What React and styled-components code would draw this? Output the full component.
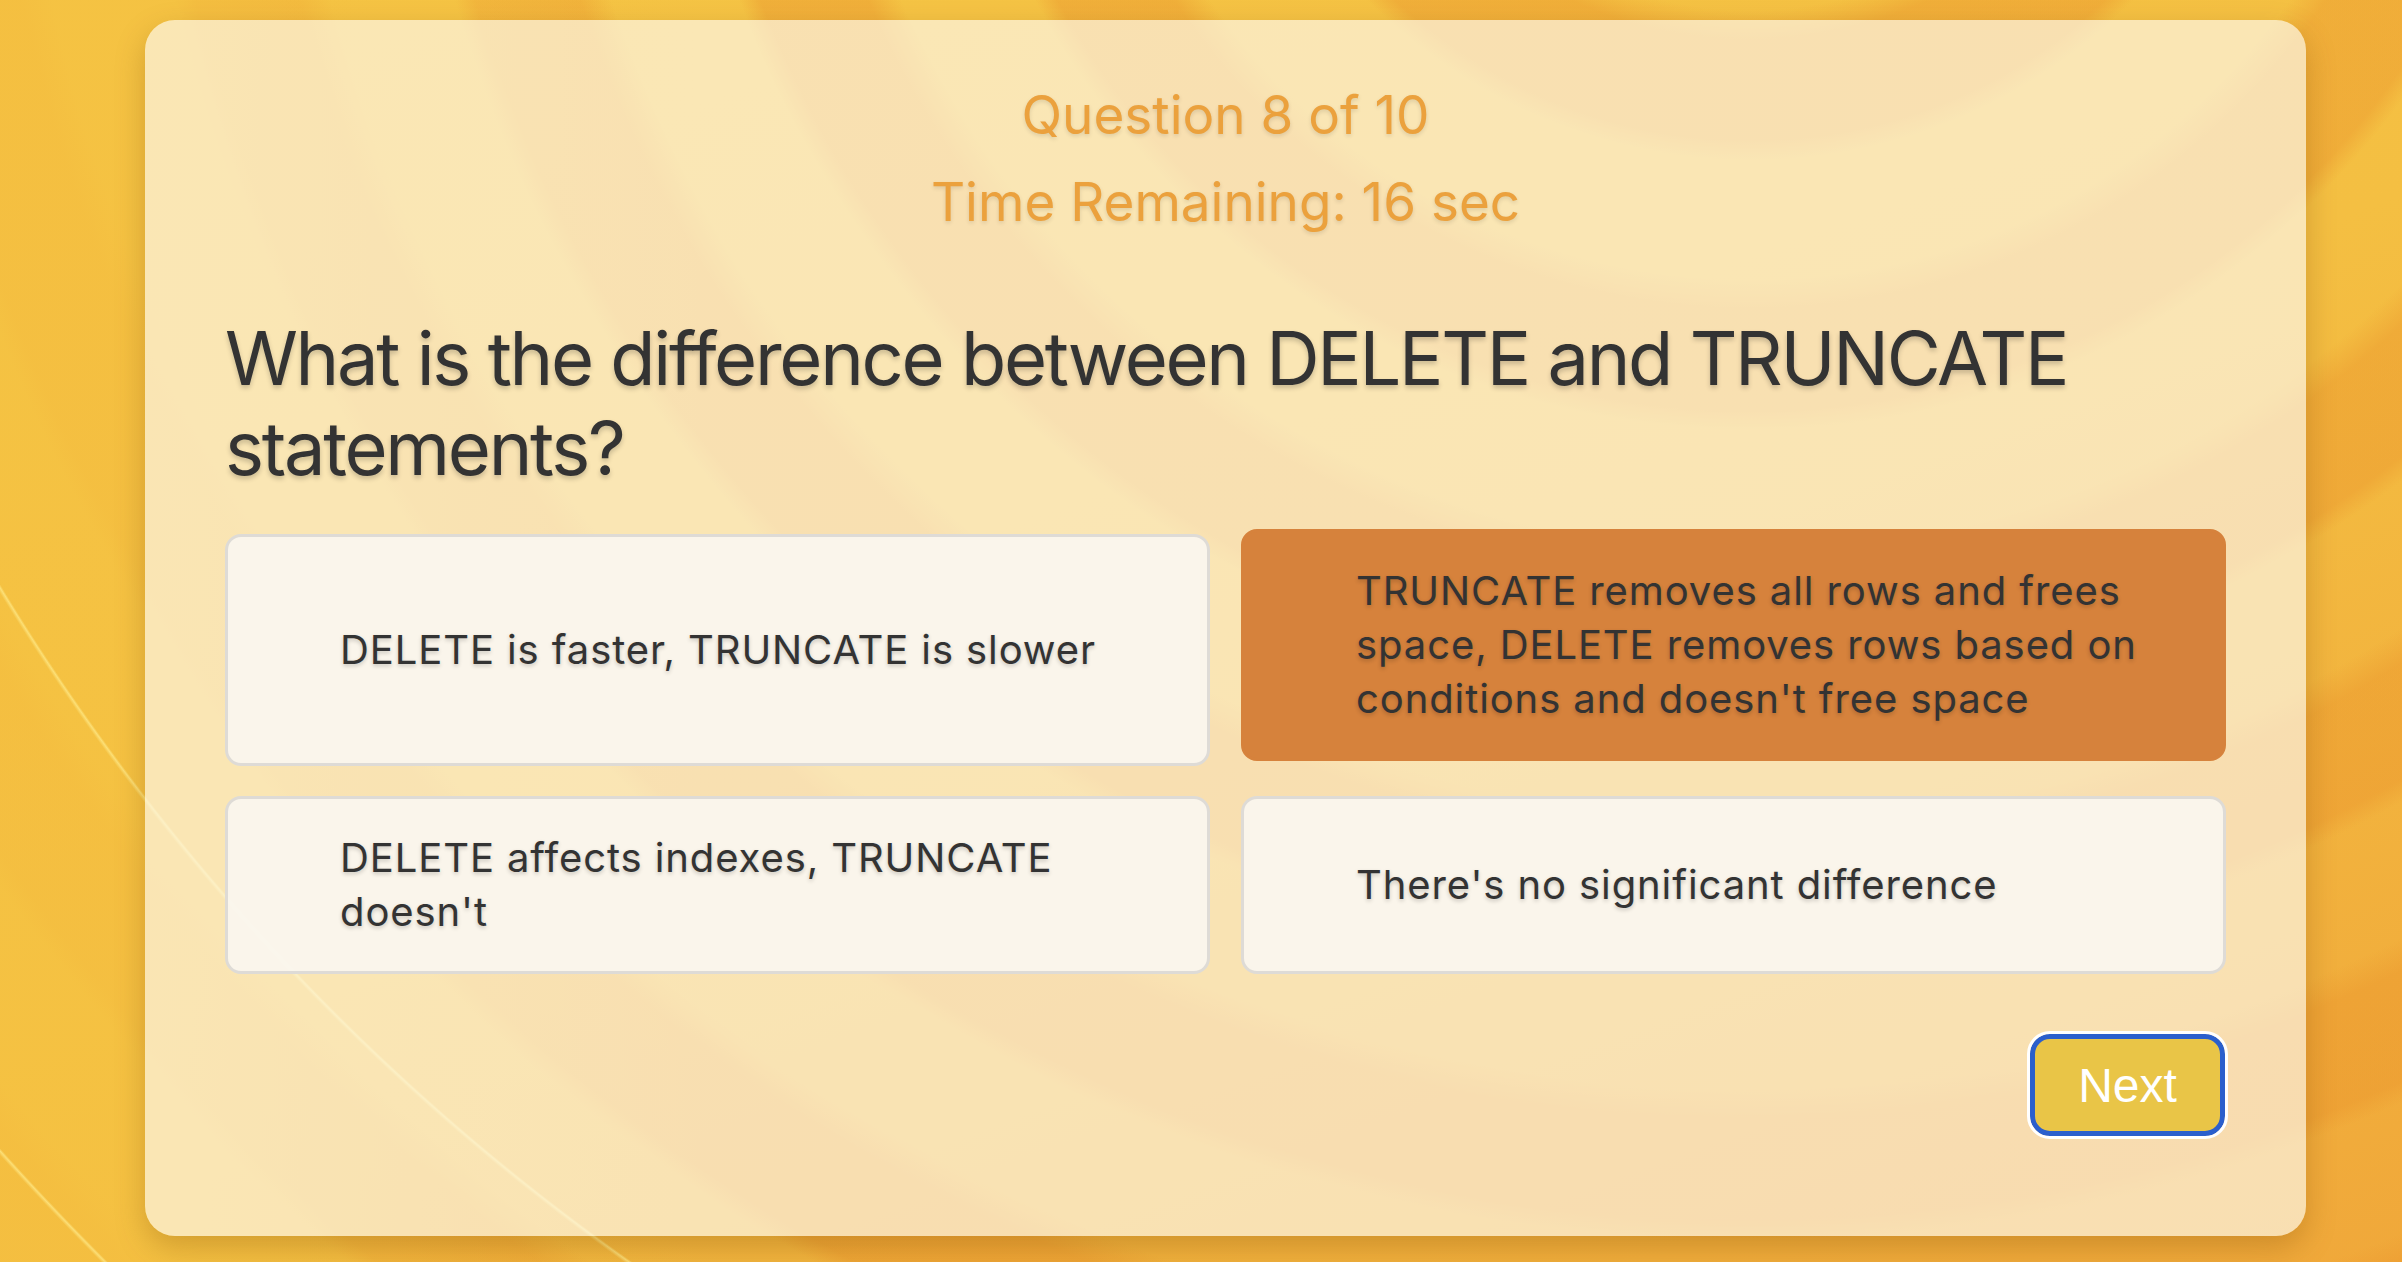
import React from 'react';
import styled, { createGlobalStyle } from 'styled-components';

const GlobalStyle = createGlobalStyle`
    html, body {
        margin: 0;
        padding: 0;
        height: 100%;
    }
    body {
        font-family: Inter, "Noto Sans", "Liberation Sans", sans-serif;
        background-color: #f4bf42;
        background-image:
            radial-gradient(circle at 1936px -588px, transparent 2263px, rgba(255, 236, 140, 0.7) 2265px, transparent 2268px),
            radial-gradient(circle at 2220px -849px, transparent 2986px, rgba(255, 236, 140, 0.7) 2988px, transparent 2991px),
            linear-gradient(90deg, rgba(245, 194, 66, 0.85) 0px, rgba(245, 194, 66, 0.85) 140px, rgba(245, 194, 66, 0) 700px),
            repeating-radial-gradient(circle at 1750px -380px,
                rgba(245, 196, 68, 0) 0px, rgba(245, 196, 68, 0) 120px,
                rgba(234, 148, 44, 0.42) 150px, rgba(234, 148, 44, 0.42) 250px,
                rgba(245, 196, 68, 0) 270px),
            linear-gradient(160deg, #f5c545 0%, #f4bf42 50%, #f0a83a 100%);
        overflow: hidden;
    }
`;

const Page = styled.div`
    width: 2402px;
    height: 1262px;
    box-sizing: border-box;
    padding: 20px 96px 0 145px;
    display: flex;
    align-items: flex-start;
`;

const Card = styled.div`
    flex: 1;
    box-sizing: border-box;
    height: 1216px;
    padding: 63px 80px 0;
    background: rgba(252, 247, 235, 0.68);
    border-radius: 30px;
    box-shadow: 0 12px 30px rgba(120, 70, 0, 0.28);
    display: flex;
    flex-direction: column;
`;

const Meta = styled.div`
    text-align: center;
    color: #eba13d;
    font-size: 53px;
    line-height: 65px;
    text-shadow: 0 2px 4px rgba(0, 0, 0, 0.12);
    & + & {
        margin-top: 22px;
    }
`;

const Question = styled.h2`
    margin: 78px 0 0;
    font-size: 74px;
    font-weight: 400;
    line-height: 90px;
    color: #333;
    letter-spacing: -2.3px;
    text-shadow: 0 3px 5px rgba(0, 0, 0, 0.2);
`;

const Options = styled.div`
    margin-top: 41px;
    display: grid;
    grid-template-columns: 1fr 1fr;
    column-gap: 31px;
    row-gap: 30px;
`;

const Option = styled.button`
    box-sizing: border-box;
    display: flex;
    align-items: center;
    min-height: 176px;
    padding: 32px 50px 32px 112px;
    border: 3px solid ${props => (props.selected ? '#d6823c' : '#dedbd6')};
    border-radius: 16px;
    background: ${props => (props.selected ? '#d6823c' : 'rgba(250, 246, 240, 0.92)')};
    transform: ${props => (props.selected ? 'translateY(-5px)' : 'none')};
    font-family: Inter, "Noto Sans", "Liberation Sans", sans-serif;
    font-size: 40px;
    letter-spacing: 0.9px;
    line-height: 54px;
    color: #333;
    text-align: left;
    text-shadow: 0 2px 4px rgba(0, 0, 0, 0.2);
    cursor: pointer;
`;

const Footer = styled.div`
    margin-top: 60px;
    display: flex;
    justify-content: flex-end;
`;

const NextButton = styled.button`
    box-sizing: border-box;
    width: 195px;
    height: 102px;
    margin-right: 1px;
    border: 5px solid #2b5fcc;
    border-radius: 20px;
    outline: 3px solid #ffffff;
    background: #e9c547;
    color: #ffffff;
    font-family: "Liberation Sans", Arial, sans-serif;
    font-size: 48px;
    cursor: pointer;
`;

const options = [
    { text: 'DELETE is faster, TRUNCATE is slower' },
    { text: "TRUNCATE removes all rows and frees space, DELETE removes rows based on conditions and doesn't free space", selected: true },
    { text: "DELETE affects indexes, TRUNCATE doesn't" },
    { text: "There's no significant difference" },
];

const App = () => {
    return (
        <>
            <GlobalStyle />
            <Page>
                <Card>
                    <Meta>Question 8 of 10</Meta>
                    <Meta>Time Remaining: 16 sec</Meta>
                    <Question>What is the difference between DELETE and TRUNCATE statements?</Question>
                    <Options>
                        {options.map(o => (
                            <Option key={o.text} selected={o.selected}>{o.text}</Option>
                        ))}
                    </Options>
                    <Footer>
                        <NextButton>Next</NextButton>
                    </Footer>
                </Card>
            </Page>
        </>
    );
};

export default App;
